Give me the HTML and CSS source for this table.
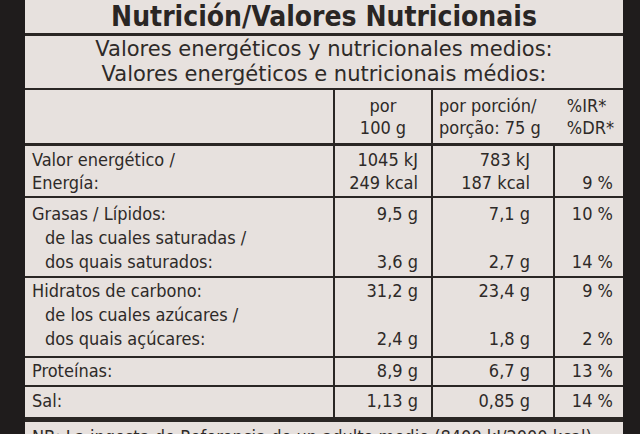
FILE: index.html
```html
<!DOCTYPE html>
<html lang="es">
<head>
<meta charset="utf-8">
<title>Nutrición/Valores Nutricionais</title>
<link rel="stylesheet" href="styles.css">
</head>
<body>
<div class="label">
  <div class="title">Nutrición/Valores Nutricionais</div>
  <div class="sub">Valores energéticos y nutricionales medios:<br>Valores energéticos e nutricionais médios:</div>
  <div class="row head">
    <div class="c1"></div>
    <div class="c2">por<br>100 g</div>
    <div class="c34">
      <div class="portion">por porción/<br>porção: 75 g</div>
      <div class="ir">%IR*<br>%DR*</div>
    </div>
  </div>
  <div class="row energy">
    <div class="c1">Valor energético /<br>Energía:</div>
    <div class="c2">1045 kJ<br>249 kcal</div>
    <div class="c3">783 kJ<br>187 kcal</div>
    <div class="c4"><br>9 %</div>
  </div>
  <div class="row fat">
    <div class="c1">Grasas / Lípidos:<br><span class="ind">de las cuales saturadas /</span><br><span class="ind">dos quais saturados:</span></div>
    <div class="c2">9,5 g<br><br>3,6 g</div>
    <div class="c3">7,1 g<br><br>2,7 g</div>
    <div class="c4">10 %<br><br>14 %</div>
  </div>
  <div class="row carb">
    <div class="c1">Hidratos de carbono:<br><span class="ind">de los cuales azúcares /</span><br><span class="ind">dos quais açúcares:</span></div>
    <div class="c2">31,2 g<br><br>2,4 g</div>
    <div class="c3">23,4 g<br><br>1,8 g</div>
    <div class="c4">9 %<br><br>2 %</div>
  </div>
  <div class="row prot">
    <div class="c1">Proteínas:</div>
    <div class="c2">8,9 g</div>
    <div class="c3">6,7 g</div>
    <div class="c4">13 %</div>
  </div>
  <div class="row salt">
    <div class="c1">Sal:</div>
    <div class="c2">1,13 g</div>
    <div class="c3">0,85 g</div>
    <div class="c4">14 %</div>
  </div>
  <div class="nb">NB: La ingesta de Referencia de un adulto medio (8400 kJ/2000 kcal).</div>
</div>
</body>
</html>
```

FILE: styles.css
```css
* {
  box-sizing: border-box;
  margin: 0;
  padding: 0;
}

html,
body {
  width: 640px;
  height: 434px;
  overflow: hidden;
}

body {
  background: #1f1c1c;
  font-family: "DejaVu Sans Condensed", "DejaVu Sans", sans-serif;
  font-stretch: condensed;
  color: #2e2a28;
}

.label {
  margin-left: 25px;
  width: 598px;
  height: 434px;
  background: #e7e1de;
}

.title {
  height: 36px;
  border-bottom: 3px solid #2a2624;
  text-align: center;
  font-weight: bold;
  font-size: 28px;
  line-height: 34px;
  color: #2a2624;
}

.sub {
  height: 54px;
  border-bottom: 2px solid #2a2624;
  padding-top: 1px;
  text-align: center;
  font-family: "DejaVu Sans", sans-serif;
  font-stretch: normal;
  font-size: 21px;
  line-height: 25px;
}

.row {
  display: grid;
  grid-template-columns: 308px 98px 122px 70px;
  border-bottom: 2px solid #2a2624;
  font-size: 18px;
}

.row > div + div {
  border-left: 2px solid #2a2624;
}

.c1 {
  padding-left: 7px;
}

.ind {
  padding-left: 13px;
}

.c2 {
  text-align: right;
  padding-right: 13px;
}

.c3 {
  text-align: right;
  padding-right: 23px;
}

.c4 {
  text-align: right;
  padding-right: 10px;
}

.head {
  border-bottom-width: 3px;
  line-height: 22px;
  height: 56px;
}

.head > div {
  padding-top: 5px;
}

.head .c2 {
  text-align: center;
  padding-right: 0;
}

.c34 {
  grid-column: span 2;
  display: flex;
  justify-content: space-between;
  padding-left: 6px;
  padding-right: 9px;
}

.energy {
  line-height: 23px;
  height: 52px;
}

.energy > div {
  padding-top: 2px;
}

.fat {
  line-height: 24px;
  height: 80px;
}

.fat > div {
  padding-top: 4px;
}

.carb {
  line-height: 24px;
  height: 80px;
}

.carb > div {
  padding-top: 1px;
}

.prot {
  line-height: 24px;
  height: 29px;
}

.prot > div {
  padding-top: 1px;
}

.salt {
  line-height: 24px;
  height: 35px;
  border-bottom-width: 5px;
}

.salt > div {
  padding-top: 2px;
}

.nb {
  padding: 4px 0 0 7px;
  font-size: 18px;
  line-height: 22px;
  white-space: nowrap;
}
```
